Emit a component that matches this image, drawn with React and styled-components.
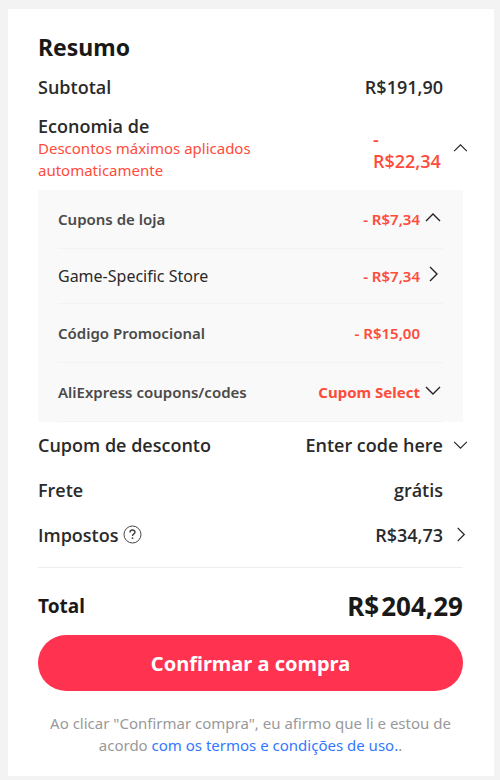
import React, { useState } from "react";
import styled, { createGlobalStyle } from "styled-components";

const arrows = {
    up: "M1 9 L8 2 L15 9",
    down: "M1 2 L8 9 L15 2",
    right: "M5 1 L12 8 L5 15",
};

const Arrow = ({ dir, size, weight = 1 }) => (
    <svg
        width={size}
        height={dir === "right" ? size : Math.round(size * 11 / 16)}
        viewBox={dir === "right" ? "0 0 16 16" : "0 0 16 11"}
        fill="none"
        stroke="#222"
        strokeWidth={weight}
        aria-hidden="true"
    >
        <path d={arrows[dir]} />
    </svg>
);

const coupons = [
    { label: "Cupons de loja", value: "- R$7,34", dir: "up" },
    { label: "Game-Specific Store", value: "- R$7,34", dir: "right", sub: true },
    { label: "Código Promocional", value: "- R$15,00" },
    { label: "AliExpress coupons/codes", value: "Cupom Select", dir: "down", strong: true },
];

const CouponPanel = () => (
    <Panel>
        {coupons.map((c) => (
            <CouponRow key={c.label} $sub={c.sub}>
                <CouponLabel $sub={c.sub}>{c.label}</CouponLabel>
                <CouponValue $strong={c.strong}>{c.value}</CouponValue>
                <CouponArrow>
                    {c.dir && (
                        <IconButton type="button" aria-label={c.label}>
                            <Arrow dir={c.dir} size={16} weight={1.4} />
                        </IconButton>
                    )}
                </CouponArrow>
            </CouponRow>
        ))}
    </Panel>
);

const App = () => {
    const [open, setOpen] = useState(true);

    return (
        <>
            <GlobalStyle />
            <Card>
                <Title>Resumo</Title>
                <Row>
                    <Label>Subtotal</Label>
                    <Value>R$191,90</Value>
                    <ArrowSlot />
                </Row>
                <SavingsRow>
                    <SavingsText>
                        <Label>Economia de</Label>
                        <Hint>Descontos máximos aplicados automaticamente</Hint>
                    </SavingsText>
                    <SavingsValue>- R$22,34</SavingsValue>
                    <ArrowSlot>
                        <IconButton type="button" aria-label="Economia de" onClick={() => setOpen(!open)}>
                            <Arrow dir={open ? "up" : "down"} size={15} weight={1.2} />
                        </IconButton>
                    </ArrowSlot>
                </SavingsRow>
                {open && <CouponPanel />}
                <Row>
                    <Label>Cupom de desconto</Label>
                    <Value>Enter code here</Value>
                    <ArrowSlot>
                        <IconButton type="button" aria-label="Cupom de desconto">
                            <Arrow dir="down" size={15} weight={1.2} />
                        </IconButton>
                    </ArrowSlot>
                </Row>
                <Row>
                    <Label>Frete</Label>
                    <Value>grátis</Value>
                    <ArrowSlot />
                </Row>
                <Row>
                    <Label>
                        Impostos
                        <svg width="19" height="19" viewBox="0 0 19 19" fill="none" stroke="#444" aria-hidden="true">
                            <circle cx="9.5" cy="9.5" r="8.5" />
                            <path d="M7 7.4 C7 5.8 8 5 9.4 5 C10.9 5 12 5.8 12 7.2 C12 8.9 9.5 8.9 9.5 11" strokeWidth="1.4" />
                            <circle cx="9.5" cy="13.2" r="0.9" fill="#444" stroke="none" />
                        </svg>
                    </Label>
                    <Value>R$34,73</Value>
                    <ArrowSlot>
                        <IconButton type="button" aria-label="Impostos">
                            <Arrow dir="right" size={15} weight={1.3} />
                        </IconButton>
                    </ArrowSlot>
                </Row>
                <TotalRow>
                    <TotalLabel>Total</TotalLabel>
                    <TotalValue>
                        <span>R$</span>
                        <span>204,29</span>
                    </TotalValue>
                </TotalRow>
                <ConfirmButton type="button">Confirmar a compra</ConfirmButton>
                <Terms>
                    Ao clicar "Confirmar compra", eu afirmo que li e estou de acordo{" "}
                    <a href="#termos">com os termos e condições de uso.</a>.
                </Terms>
            </Card>
        </>
    );
};

export default App;

const GlobalStyle = createGlobalStyle`
    * {
        box-sizing: border-box;
    }
    body {
        margin: 0;
        padding: 9px 6px 4px 8px;
        background-color: #f3f3f3;
        color: #2a2a2a;
        font-family: "Noto Sans", "Open Sans", sans-serif;
    }
`;

const Card = styled.main`
    display: flex;
    flex-direction: column;
    padding: 21px 31px 20px 30px;
    background-color: #fff;
`;

const Title = styled.h1`
    margin: 0;
    font-size: 23px;
    line-height: 34px;
    font-weight: 700;
    color: #191919;
`;

const Row = styled.div`
    display: flex;
    align-items: center;
    height: 45px;
`;

const Label = styled.span`
    display: flex;
    align-items: center;
    gap: 4px;
    font-family: "Open Sans", sans-serif;
    font-size: 18px;
    line-height: 22px;
    font-weight: 600;
`;

const Value = styled.span`
    margin-left: auto;
    font-family: "Open Sans", sans-serif;
    font-size: 18px;
    line-height: 22px;
    font-weight: 600;
`;

const ArrowSlot = styled.div`
    display: flex;
    justify-content: flex-end;
    width: 20px;
    margin-right: -5px;
    margin-left: 5px;
`;

const IconButton = styled.button`
    display: flex;
    padding: 0;
    border: none;
    background: none;
    cursor: pointer;
`;

const SavingsRow = styled.div`
    display: flex;
    align-items: center;
    padding: 6px 0 9px;
`;

const SavingsText = styled.div`
    flex: 1;
`;

const Hint = styled.p`
    max-width: 240px;
    margin: 0;
    font-size: 15px;
    line-height: 22px;
    color: #ff4b3a;
`;

const SavingsValue = styled.span`
    width: 70px;
    padding-top: 4px;
    font-family: "Open Sans", sans-serif;
    font-size: 18px;
    line-height: 22px;
    font-weight: 600;
    color: #ff4b3a;
`;

const Panel = styled.div`
    padding: 0 20px;
    background-color: #f9f9f9;
`;

const CouponRow = styled.div`
    display: flex;
    align-items: center;
    height: ${(props) => (props.$sub ? "55px" : "59px")};
    border-bottom: 1px solid #f3f3f3;
`;

const CouponLabel = styled.span`
    font-size: ${(props) => (props.$sub ? "16px" : "15px")};
    line-height: 22px;
    font-weight: ${(props) => (props.$sub ? 400 : 600)};
    color: ${(props) => (props.$sub ? "#2a2a2a" : "#4a4a4a")};
`;

const CouponValue = styled.span`
    margin-left: auto;
    font-size: 15px;
    line-height: 22px;
    font-weight: ${(props) => (props.$strong ? 700 : 600)};
    color: #ff4b3a;
`;

const CouponArrow = styled.div`
    display: flex;
    justify-content: flex-end;
    width: 23px;
    padding: 0 2px 4px 0;
`;

const TotalRow = styled.div`
    display: flex;
    justify-content: space-between;
    align-items: center;
    margin-top: 10px;
    padding: 19px 0 10px;
    border-top: 1px solid #eee;
    color: #191919;
`;

const TotalLabel = styled.span`
    font-size: 19px;
    line-height: 22px;
    font-weight: 700;
`;

const TotalValue = styled.span`
    display: flex;
    gap: 2px;
    font-size: 26px;
    line-height: 38px;
    font-weight: 700;
`;

const ConfirmButton = styled.button`
    height: 56px;
    border: none;
    border-radius: 28px;
    background-color: #ff334f;
    color: #fff;
    font-family: inherit;
    font-size: 20px;
    font-weight: 700;
    cursor: pointer;
`;

const Terms = styled.p`
    margin: 21px 0 0;
    font-size: 15px;
    line-height: 22px;
    text-align: center;
    color: #999;

    a {
        color: #3377ff;
        text-decoration: none;
    }
`;
